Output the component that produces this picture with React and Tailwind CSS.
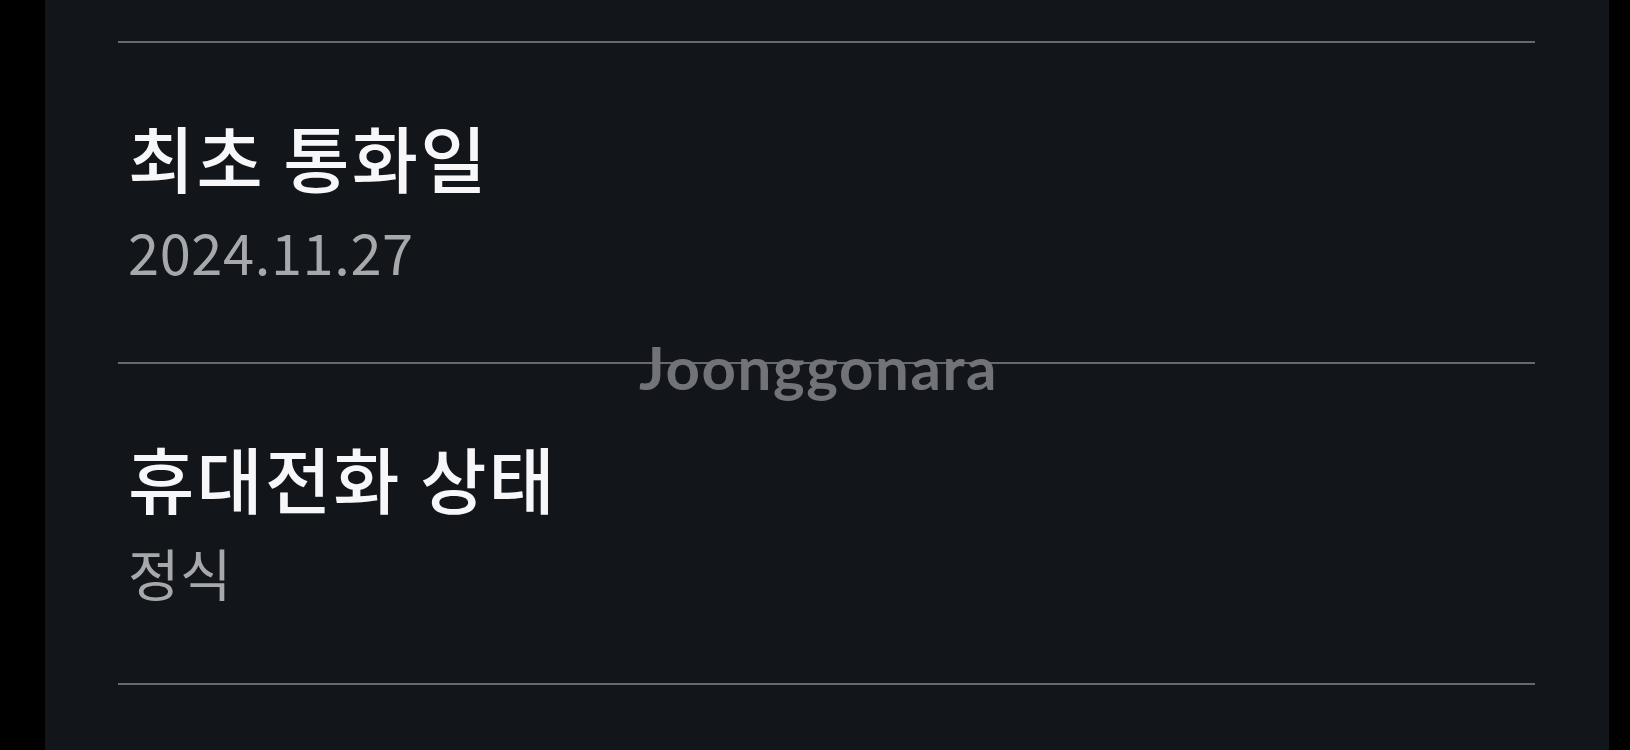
import React from "react";

const rows = [
  { label: "최초 통화일", value: "2024.11.27" },
  { label: "휴대전화 상태", value: "정식" },
];

export default function App() {
  return (
    <div className="flex h-[750px] w-full bg-black overflow-hidden" style={{ fontFamily: '"Noto Sans CJK KR", "Noto Sans", sans-serif' }}>
      <div className="w-[45px] shrink-0 bg-black" />

      <div className="relative flex-1 bg-[#12151a] pl-[73px] pr-[74px] pt-[41px]">
        <div className="h-[2px] bg-[#68696d]" />

        {rows.map((row) => (
          <div key={row.label}>
            <div className="pt-[77px] pb-[83px] pl-[10px]">
              <p className="text-[72px] leading-none font-medium tracking-[2.2px] text-[#f7f7f9]">{row.label}</p>
              <p className="mt-[31px] text-[56px] leading-none font-normal text-[#a7a8ac] tracking-[0.6px]">{row.value}</p>
            </div>
            <div className="h-[2px] bg-[#68696d]" />
          </div>
        ))}

        {/* watermark */}
        <div
          className="absolute left-[594px] top-[337px] text-[60px] leading-none font-bold text-[#727378] tracking-[1.6px]"
          style={{ fontFamily: "Lato, sans-serif" }}
        >
          Joonggonara
        </div>
      </div>

      <div className="w-[21px] shrink-0 bg-black" />
    </div>
  );
}
